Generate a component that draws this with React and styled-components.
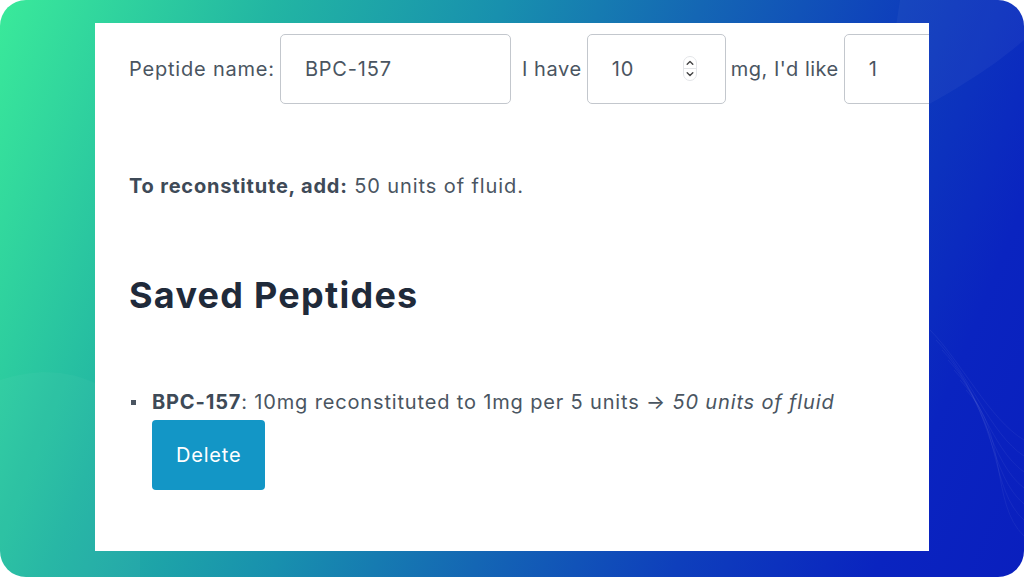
import React from "react";
import styled, { createGlobalStyle } from "styled-components";

const Global = createGlobalStyle`
  html, body { margin: 0; padding: 0; background: #ffffff; }
  body { font-family: Inter, "Noto Sans", sans-serif; }
  * { box-sizing: border-box; }
`;

const Frame = styled.div`
  position: relative;
  width: 1024px;
  height: 577px;
  border-radius: 26px;
  overflow: hidden;
  background: linear-gradient(112deg, #3aea9a 0%, #22b5a3 22%, #1890ae 40%, #1466b4 56%, #0e3fbc 72%, #0a24c0 88%, #0a1fbe 100%);
  padding: 23px 95px 26px 95px;
  display: flex;
`;

const Waves = styled.svg`
  position: absolute;
  inset: 0;
  width: 100%;
  height: 100%;
  pointer-events: none;
`;

const Card = styled.main`
  position: relative;
  flex: 1;
  background: #ffffff;
  overflow: hidden;
  padding: 11px 34px 0 34px;
  color: #4a5561;
  letter-spacing: 0.04em;
`;

const Row = styled.div`
  display: flex;
  align-items: center;
  gap: 5px;
  white-space: nowrap;
`;

const Label = styled.span`
  font-size: 20px;
  color: #4a5561;
  flex-shrink: 0;
  letter-spacing: ${(p) => p.$ls || "0.04em"};
`;

const Field = styled.div`
  position: relative;
  flex-shrink: 0;
  margin-right: ${(p) => p.$mr || 0}px;
`;

const Input = styled.input`
  display: block;
  width: ${(p) => p.$w}px;
  height: 70px;
  padding: 0 24px;
  border: 1px solid #c3c7cd;
  border-radius: 5px;
  font-family: Inter, "Noto Sans", sans-serif;
  font-size: 20px;
  letter-spacing: 0.04em;
  color: #4a5561;
  background: #fff;
  outline: none;
`;

const Stepper = styled.svg`
  position: absolute;
  right: 29px;
  top: 22px;
  width: 14px;
  height: 25px;
`;

const Result = styled.p`
  margin: 67px 0 0 0;
  font-size: 20px;
  line-height: 30px;
  letter-spacing: 0.045em;
  color: #4a5561;
  strong { font-weight: 700; color: #3e4a57; letter-spacing: 0.04em; }
`;

const Heading = styled.h2`
  margin: 73px 0 0 0;
  font-size: 36px;
  line-height: 43px;
  font-weight: 700;
  letter-spacing: 0.035em;
  color: #1f2a3a;
`;

const List = styled.ul`
  margin: 70px 0 0 0;
  padding-left: 23px;
  list-style: none;
`;

const Item = styled.li`
  position: relative;
  font-size: 20px;
  line-height: 30px;
  color: #4a5561;
  letter-spacing: 0.042em;
  &::before {
    content: "";
    position: absolute;
    left: -21px;
    top: 13px;
    width: 5px;
    height: 5px;
    background: #4a5561;
  }
  strong { font-weight: 700; color: #3e4a57; }
  em { font-style: italic; }
`;

const Button = styled.button`
  display: block;
  margin-top: 3px;
  height: 70px;
  padding: 0 24px;
  border: none;
  border-radius: 4px;
  background: #1396c6;
  color: #ffffff;
  font-family: Inter, "Noto Sans", sans-serif;
  font-size: 20px;
  letter-spacing: 0.04em;
  cursor: pointer;
`;

export default function App() {
  return (
    <>
      <Global />
      <Frame>
        <Waves viewBox="0 0 1024 577" preserveAspectRatio="none">
          <path d="M880 130 C 940 100, 990 70, 1024 40 L1024 0 L 900 0 Z" fill="rgba(255,255,255,0.04)" />
          {[0, 1, 2, 3, 4, 5, 6].map((i) => (
            <path
              key={i}
              d={`M${930 + i * 6} ${330 + i * 10} C ${960 + i * 8} ${360 + i * 12}, ${990} ${420 + i * 14}, ${1024} ${440 + i * 16}`}
              stroke="rgba(255,255,255,0.05)"
              fill="none"
              strokeWidth="1"
            />
          ))}
          <path d="M0 380 C 60 360, 110 380, 140 420 L 140 577 L 0 577 Z" fill="rgba(255,255,255,0.03)" />
        </Waves>
        <Card>
          <Row>
            <Label>Peptide name:</Label>
            <Field $mr={6}>
              <Input $w={231} defaultValue="BPC-157" />
            </Field>
            <Label $ls="0.03em">I have</Label>
            <Field>
              <Input $w={139} defaultValue="10" />
              <Stepper viewBox="0 0 14 25">
                <rect x="0.5" y="0.5" width="13" height="24" rx="6.5" fill="#fff" stroke="#e3e5e8" />
                <line x1="1" y1="12.5" x2="13" y2="12.5" stroke="#e3e5e8" />
                <path d="M4.2 8.3 L7 5.6 L9.8 8.3" stroke="#444" strokeWidth="1.4" fill="none" strokeLinecap="round" strokeLinejoin="round" />
                <path d="M4.2 16.7 L7 19.4 L9.8 16.7" stroke="#444" strokeWidth="1.4" fill="none" strokeLinecap="round" strokeLinejoin="round" />
              </Stepper>
            </Field>
            <Label $ls="0.025em">mg, I'd like</Label>
            <Field>
              <Input $w={139} defaultValue="1" />
            </Field>
          </Row>
          <Result>
            <strong>To reconstitute, add:</strong> 50 units of fluid.
          </Result>
          <Heading>Saved Peptides</Heading>
          <List>
            <Item>
              <strong>BPC-157</strong>: 10mg reconstituted to 1mg per 5 units → <em>50 units of fluid</em>
              <Button>Delete</Button>
            </Item>
          </List>
        </Card>
      </Frame>
    </>
  );
}
